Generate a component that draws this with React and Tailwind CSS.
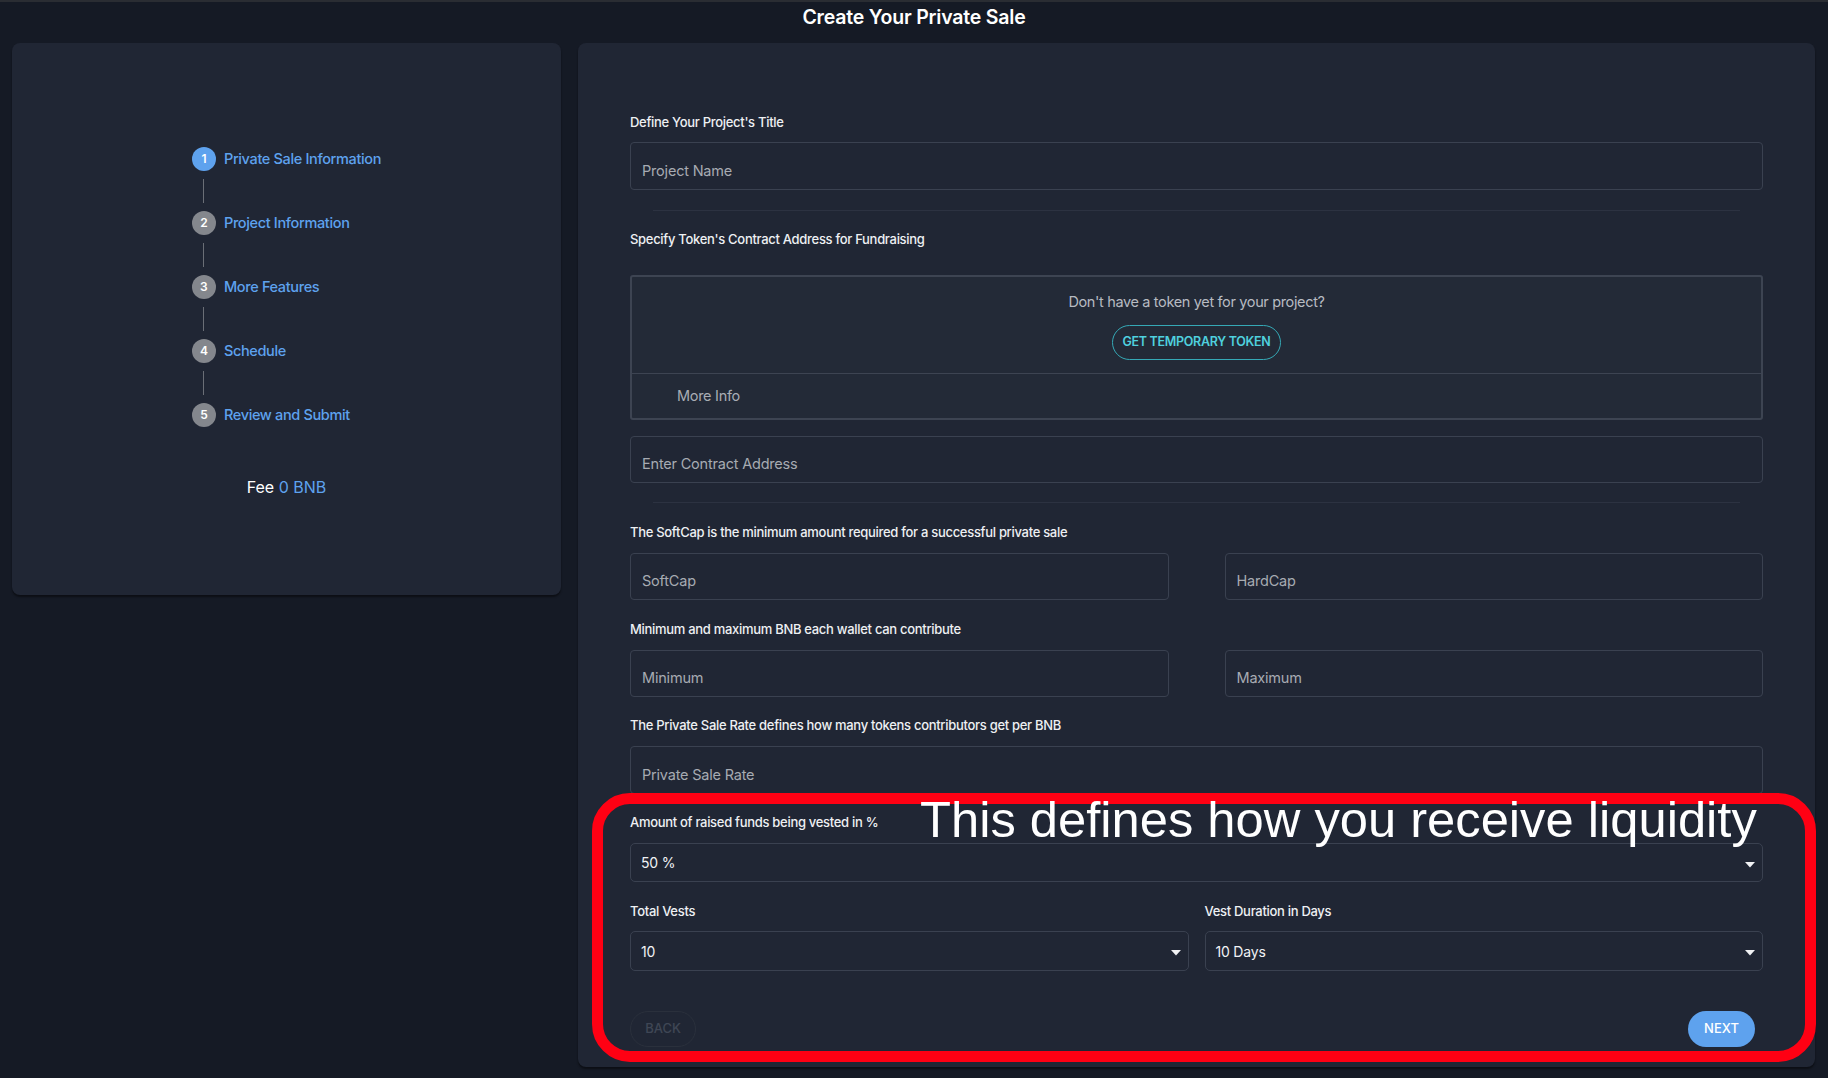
import { useState } from 'react';

const steps = [
  'Private Sale Information',
  'Project Information',
  'More Features',
  'Schedule',
  'Review and Submit',
];

function Label({ children, className = '' }) {
  return (
    <div className={`text-[13px] leading-5 font-medium text-[#eef0f3] tracking-[-0.3px] ${className}`}>
      {children}
    </div>
  );
}

function TextField({ placeholder, className = '' }) {
  return (
    <div
      className={`h-[47px] rounded-[4px] border border-[#3a4150] flex items-end pb-[8px] pl-[11px] ${className}`}
    >
      <span className="text-[14.5px] leading-5 text-[#a7abb2] tracking-[-0.2px]">{placeholder}</span>
    </div>
  );
}

function SelectField({ value, className = '' }) {
  return (
    <div
      className={`h-10 rounded-[5px] border border-[#3a4150] flex items-center justify-between pl-[10px] pr-[7px] ${className}`}
    >
      <span className="text-[14px] text-[#f1f2f4] tracking-[-0.2px]">{value}</span>
      <svg width="10" height="6" viewBox="0 0 10 6" className="mt-[4px]">
        <path d="M0 0h10L5 5.5z" fill="#f1f2f4" />
      </svg>
    </div>
  );
}

function Divider() {
  return <div className="h-px bg-[#2c3241] mx-[23px]" />;
}

export default function App() {
  const [active] = useState(0);

  return (
    <div
      className="min-h-screen w-full bg-[#151a25] border-t-2 border-[#2a2d33]"
      style={{ fontFamily: 'Inter, "Noto Sans", sans-serif' }}
    >
      {/* Title */}
      <div className="h-[41px] flex items-start justify-center pt-[3px]">
        <h1 className="text-[19.5px] leading-6 font-semibold text-white tracking-[-0.2px]">
          Create Your Private Sale
        </h1>
      </div>

      <div className="flex items-start gap-[17px] pl-3 pr-[13px]">
        {/* Stepper card */}
        <div className="w-[549px] h-[552px] shrink-0 rounded-[8px] bg-[#202634] shadow-[0_2px_2px_rgba(0,0,0,0.45)] flex flex-col items-center pt-[104px]">
          <div className="flex flex-col">
            {steps.map((s, i) => (
              <div key={s} className="flex flex-col">
                <div className="flex items-center gap-2 h-6">
                  <div
                    className={`w-6 h-6 rounded-full flex items-center justify-center text-[12px] font-semibold text-white ${
                      i === active ? 'bg-[#5ea2ee]' : 'bg-[#84878d]'
                    }`}
                  >
                    {i + 1}
                  </div>
                  <span className="text-[14.5px] font-medium text-[#5ea2ee] tracking-[-0.35px]">{s}</span>
                </div>
                {i < steps.length - 1 && (
                  <div className="w-px h-6 bg-[#6a6e76] ml-[11.5px] my-2" />
                )}
              </div>
            ))}
          </div>
          <div className="mt-[48px] text-[16px] leading-6">
            <span className="text-white">Fee </span>
            <span className="text-[#5ea2ee]">0 BNB</span>
          </div>
        </div>

        {/* Form card */}
        <div className="relative flex-1 h-[1024px] rounded-[8px] bg-[#202634] shadow-[0_2px_2px_rgba(0,0,0,0.45)] px-[52px] pt-[69px]">
          <Label className="mb-[10px]">Define Your Project's Title</Label>
          <TextField placeholder="Project Name" className="h-[48px]" />

          <div className="mt-5">
            <Divider />
          </div>

          <Label className="mt-[18px] mb-[26px]">Specify Token's Contract Address for Fundraising</Label>

          <div className="h-[145px] rounded-[3px] border-2 border-[#3d4452] bg-[#232a37] flex flex-col">
            <div className="flex flex-col items-center pt-[15px]">
              <div className="text-[14.5px] leading-5 text-[#b7bbc2] tracking-[-0.35px]">Don't have a token yet for your project?</div>
              <button className="mt-[13px] h-[35px] w-[169px] rounded-full border border-[#35a9b6] text-[12.5px] font-semibold text-[#4fd0de] tracking-[-0.3px]">
                GET TEMPORARY TOKEN
              </button>
            </div>
            <div className="mt-[13px] h-px bg-[#3d4452]" />
            <div className="flex-1 flex items-center pl-[45px]">
              <span className="text-[14.5px] text-[#a9adb4] tracking-[-0.3px]">More Info</span>
            </div>
          </div>

          <TextField placeholder="Enter Contract Address" className="mt-4" />

          <div className="mt-[19px]">
            <Divider />
          </div>

          <Label className="mt-[19px] mb-[11px]">The SoftCap is the minimum amount required for a successful private sale</Label>
          <div className="grid grid-cols-2 gap-[56px]">
            <TextField placeholder="SoftCap" />
            <TextField placeholder="HardCap" />
          </div>

          <Label className="mt-[19px] mb-[11px]">Minimum and maximum BNB each wallet can contribute</Label>
          <div className="grid grid-cols-2 gap-[56px]">
            <TextField placeholder="Minimum" />
            <TextField placeholder="Maximum" />
          </div>

          <Label className="mt-[18px] mb-[11px]">The Private Sale Rate defines how many tokens contributors get per BNB</Label>
          <TextField placeholder="Private Sale Rate" className="h-[48px]" />

          <Label className="mt-[18px] mb-[11px]">Amount of raised funds being vested in %</Label>
          <SelectField value="50 %" className="h-[39px]" />

          <div className="mt-[19px] grid grid-cols-2 gap-4">
            <div>
              <Label className="mb-[10px]">Total Vests</Label>
              <SelectField value="10" />
            </div>
            <div>
              <Label className="mb-[10px]">Vest Duration in Days</Label>
              <SelectField value="10 Days" />
            </div>
          </div>

          <div className="mt-10 flex items-center justify-between">
            <button className="h-9 w-[66px] rounded-full border border-[#2a303c] text-[13px] font-medium text-[#3f4655]">
              BACK
            </button>
            <button className="h-9 w-[67px] mr-2 rounded-full bg-[#5ea2ee] text-[13px] font-medium text-white">
              NEXT
            </button>
          </div>

          {/* Annotation overlay */}
          <div className="absolute left-[14px] top-[750px] w-[1224px] h-[269px] rounded-[38px] border-[11px] border-[#ff0013] pointer-events-none" />
          <div
            className="absolute left-[342px] top-[752px] text-[50.7px] leading-none text-white whitespace-nowrap pointer-events-none"
            style={{ fontFamily: '"Liberation Sans", Arial, sans-serif' }}
          >
            This defines how you receive liquidity
          </div>
        </div>
      </div>
    </div>
  );
}
